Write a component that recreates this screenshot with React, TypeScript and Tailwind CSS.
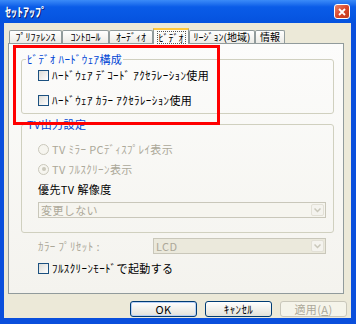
import React from 'react';

const font = "font-['Noto_Sans_CJK_JP','Noto_Sans',sans-serif]";

interface TabProps {
  label: string;
  width: string;
  active?: boolean;
}

function Tab({ label, width, active }: TabProps) {
  if (active) {
    return (
      <div
        className={`${width} relative z-10 -mb-px h-[16px] border-x border-[#919b9c] border-t-[2px] border-t-[#ffc83c] bg-[#fbfbf9] flex items-center justify-center`}
      >
        <span className="border border-dotted border-[#555] px-[1px] leading-[11px]">{label}</span>
      </div>
    );
  }
  return (
    <div
      className={`${width} h-[13px] border-x border-t border-[#919b9c] rounded-t-[2px] bg-gradient-to-b from-[#ffffff] to-[#ecebe6] flex items-end justify-center leading-[11px] pb-px`}
    >
      {label}
    </div>
  );
}

function CheckBox() {
  return (
    <div className="w-[11px] h-[11px] border border-[#1c5180] bg-gradient-to-br from-[#dcdcd7] to-[#ffffff] shrink-0" />
  );
}

function Radio({ checked }: { checked?: boolean }) {
  return (
    <div className="w-[11px] h-[11px] rounded-full border border-[#cac8bb] bg-[#f6f5ef] shrink-0 flex items-center justify-center">
      {checked && <div className="w-[4px] h-[4px] rounded-full bg-[#cac8bb]" />}
    </div>
  );
}

function DisabledSelect({ value, width, tint }: { value: string; width: string; tint?: boolean }) {
  return (
    <div
      className={`${width} h-[16px] border border-[#c9c7ba] ${tint ? 'bg-[#ebe9dc]' : 'bg-[#f6f5ef]'} flex items-center`}
    >
      <span className="flex-1 pl-[2px] text-[#aca899] leading-[12px]">{value}</span>
      <div className="w-[13px] h-[12px] mr-px rounded-[2px] bg-[#f4f3ee] border border-[#e2e0d6] flex items-center justify-center">
        <svg width="7" height="5" viewBox="0 0 7 5">
          <path d="M0.5 0.5 L3.5 3.5 L6.5 0.5" stroke="#c9c7ba" strokeWidth="1.5" fill="none" />
        </svg>
      </div>
    </div>
  );
}

function Button({ label, isDefault, disabled }: { label: React.ReactNode; isDefault?: boolean; disabled?: boolean }) {
  if (disabled) {
    return (
      <div className="w-[67px] h-[16px] rounded-[3px] border border-[#c9c7ba] bg-[#f5f4ea] flex items-center justify-center text-[#aca899] leading-[12px]">
        {label}
      </div>
    );
  }
  return (
    <div
      className={`w-[67px] h-[16px] rounded-[3px] border border-[#003c74] bg-gradient-to-b from-[#ffffff] to-[#e3e2da] flex items-center justify-center leading-[12px] ${isDefault ? 'shadow-[inset_0_0_0_1px_#b8d0f7]' : ''}`}
    >
      {label}
    </div>
  );
}

export default function App() {
  return (
    <div className={`${font} relative w-[356px] h-[324px] bg-[#0a4fdc] flex flex-col text-[11px] tracking-[0.4px] text-black overflow-hidden`}>
      {/* Title bar */}
      <div className="h-[23px] shrink-0 bg-gradient-to-b from-[#3b8bf8] via-[#0a5ce8] via-30% to-[#0552de] flex items-center pl-[5px] pr-[6px]">
        <span className="flex-1 text-white font-bold text-[12px] tracking-normal leading-[14px] [text-shadow:1px_1px_0_#0a1e6e]">ｾｯﾄｱｯﾌﾟ</span>
        <div className="w-[16px] h-[15px] rounded-[3px] border border-white bg-gradient-to-br from-[#e9836b] via-[#d9462a] to-[#c13a1c] flex items-center justify-center">
          <svg width="8" height="8" viewBox="0 0 8 8">
            <path d="M1 1 L7 7 M7 1 L1 7" stroke="white" strokeWidth="1.8" />
          </svg>
        </div>
      </div>

      {/* Body */}
      <div className="flex-1 mb-[6px] ml-[4px] mr-[5px] bg-[#ece9d8] flex flex-col">
        {/* Tabs */}
        <div className="mt-[5px] h-[15px] pl-[5px] flex items-end text-[10px] tracking-normal">
          <Tab label="ﾌﾟﾘﾌｧﾚﾝｽ" width="w-[53px]" />
          <Tab label="ｺﾝﾄﾛｰﾙ" width="w-[47px]" />
          <Tab label="ｵｰﾃﾞｨｵ" width="w-[44px]" />
          <Tab label="ﾋﾞﾃﾞｵ" width="w-[36px]" active />
          <Tab label="ﾘｰｼﾞｮﾝ(地域)" width="w-[66px]" />
          <Tab label="情報" width="w-[30px]" />
        </div>

        {/* Panel */}
        <div className="ml-[4px] w-[336px] h-[251px] border border-[#919b9c] bg-gradient-to-b from-[#fcfcfb] to-[#f4f3ee] flex flex-col">
          {/* Video hardware group */}
          <fieldset className="mt-[9px] ml-[12px] w-[313px] border border-[#d0d0bf] rounded-[3px] pb-[3px]">
            <legend className="ml-[4px] px-[1px] text-[#0046d5] leading-[12px]">ﾋﾞﾃﾞｵ ﾊｰﾄﾞｳｪｱ構成</legend>
            <div className="h-[20px] pl-[16px] flex items-center gap-[3px]">
              <CheckBox />
              <span className="leading-[12px]">ﾊｰﾄﾞｳｪｱ ﾃﾞｺｰﾄﾞ ｱｸｾﾗﾚｰｼｮﾝ使用</span>
            </div>
            <div className="mt-[5px] h-[20px] pl-[16px] flex items-center gap-[3px]">
              <CheckBox />
              <span className="leading-[12px]">ﾊｰﾄﾞｳｪｱ ｶﾗｰ ｱｸｾﾗﾚｰｼｮﾝ使用</span>
            </div>
          </fieldset>

          {/* TV output group */}
          <fieldset className="mt-[4px] ml-[12px] w-[313px] border border-[#d0d0bf] rounded-[3px] pb-[14px]">
            <legend className="ml-[4px] px-[1px] text-[#0046d5] leading-[12px]">TV出力設定</legend>
            <div className="mt-[9px] h-[20px] pl-[16px] flex items-center gap-[3px] text-[#aca899]">
              <Radio />
              <span className="leading-[12px]">TV ﾐﾗｰ PCﾃﾞｨｽﾌﾟﾚｲ表示</span>
            </div>
            <div className="h-[20px] pl-[16px] flex items-center gap-[3px] text-[#aca899]">
              <Radio checked />
              <span className="leading-[12px]">TV ﾌﾙｽｸﾘｰﾝ表示</span>
            </div>
            <div className="h-[20px] pl-[16px] flex items-center">
              <span className="leading-[12px]">優先TV 解像度</span>
            </div>
            <div className="mt-[3px] pl-[16px]">
              <DisabledSelect value="変更しない" width="w-[288px]" />
            </div>
          </fieldset>

          {/* Color preset */}
          <div className="mt-[5px] ml-[29px] flex items-center">
            <span className="w-[115px] text-[#aca899] leading-[12px]">ｶﾗｰ ﾌﾟﾘｾｯﾄ :</span>
            <DisabledSelect value="LCD" width="w-[173px]" tint />
          </div>

          {/* Fullscreen */}
          <div className="mt-[4px] h-[20px] ml-[29px] flex items-center gap-[3px]">
            <CheckBox />
            <span className="leading-[12px]">ﾌﾙｽｸﾘｰﾝﾓｰﾄﾞで起動する</span>
          </div>
        </div>

        {/* Buttons */}
        <div className="mt-[7px] pr-[4px] flex justify-end gap-[8px]">
          <Button label="OK" isDefault />
          <Button label="ｷｬﾝｾﾙ" />
          <Button label={<span>適用(<span className="underline">A</span>)</span>} disabled />
        </div>
      </div>

      {/* Annotation highlight */}
      <div className="absolute left-[13px] top-[45px] w-[207px] h-[80px] border-[3px] border-[#ff0000] pointer-events-none" />
    </div>
  );
}
